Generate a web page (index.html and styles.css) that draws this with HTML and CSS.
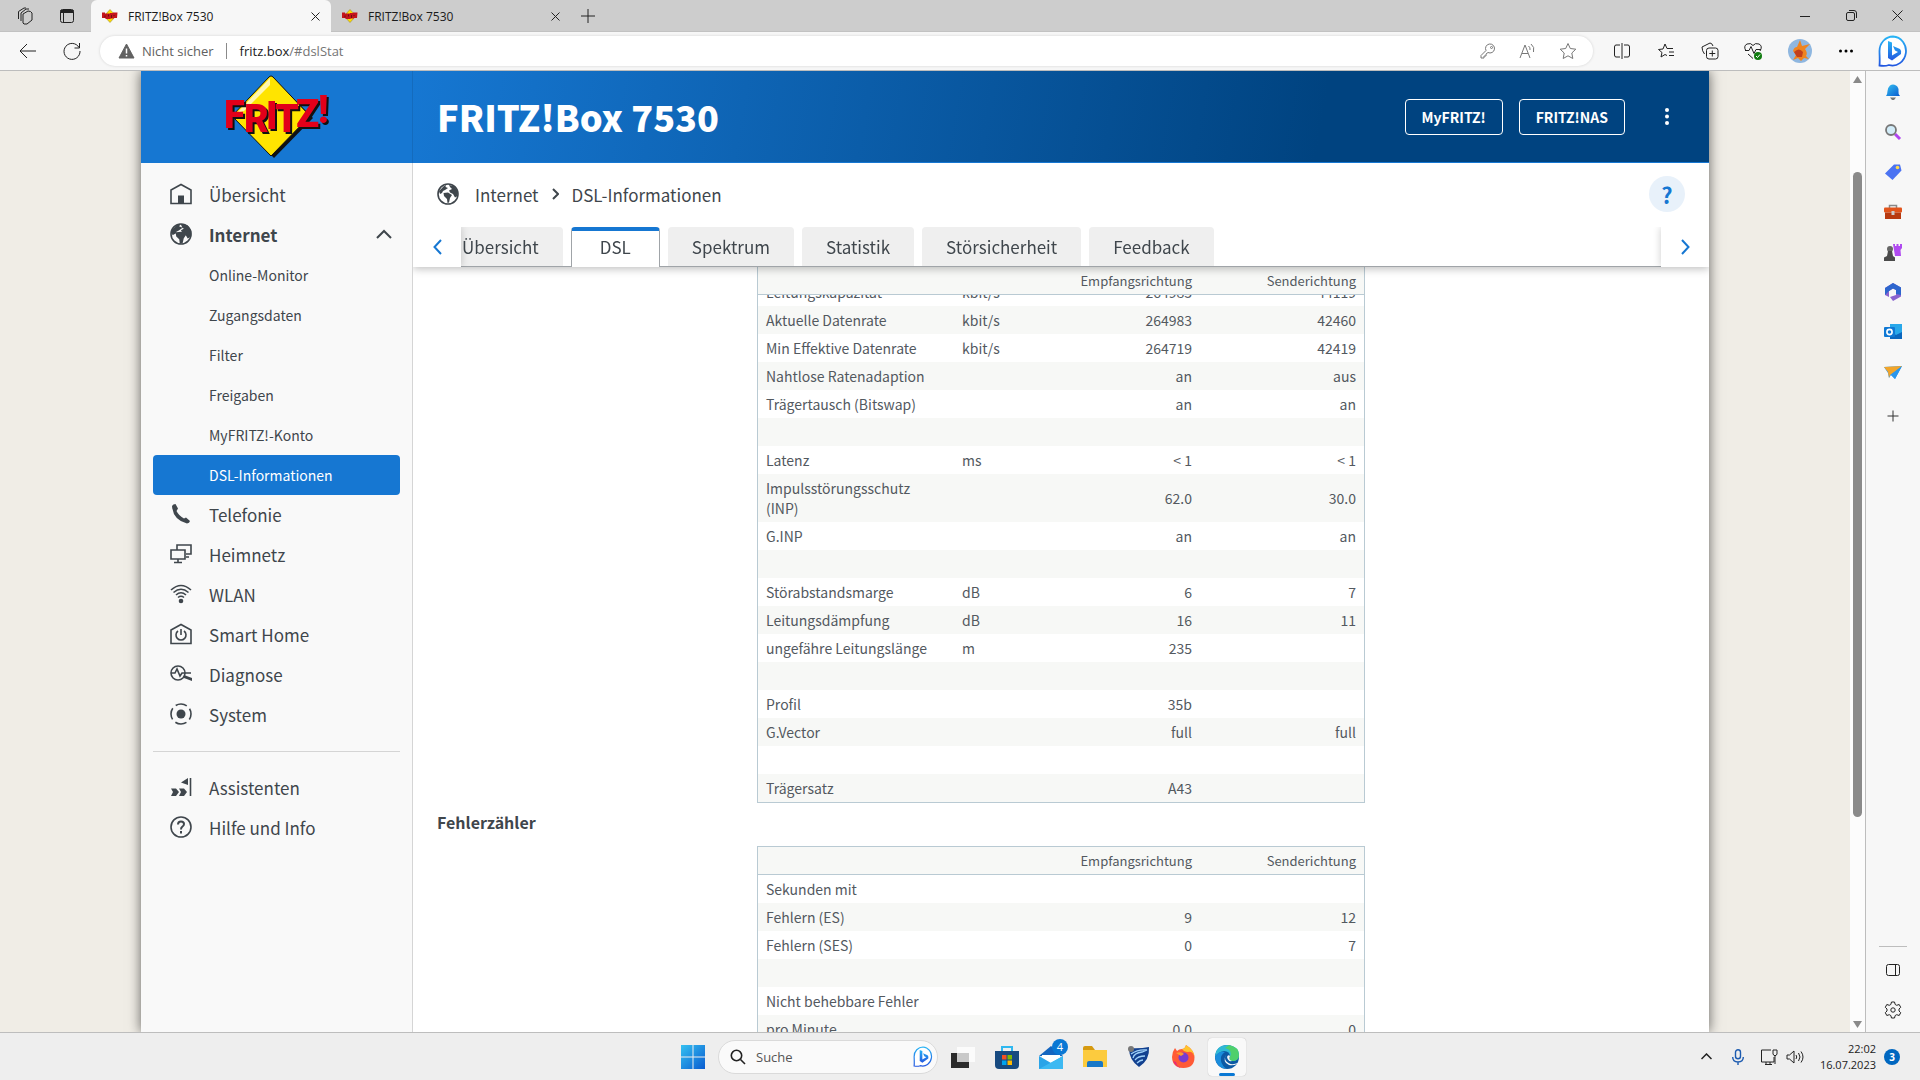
FILE: index.html
```html
<!DOCTYPE html>
<html lang="de">
<head>
    <meta charset="UTF-8">
    <meta name="viewport" content="width=device-width, initial-scale=1.0">
    <title>FRITZ!Box 7530</title>
    <link rel="stylesheet" href="styles.css">
</head>
<body>
    <svg class="defs" aria-hidden="true">
        <linearGradient id="gBlue" x1="0" y1="0" x2="1" y2="1"><stop offset="0" stop-color="#35c1f1"/><stop offset="1" stop-color="#0a5bd0"/></linearGradient>
        <linearGradient id="gBing" x1="0" y1="0" x2="0" y2="1"><stop offset="0" stop-color="#27b4f5"/><stop offset="1" stop-color="#2257e0"/></linearGradient>
        <symbol id="favicon" viewBox="0 0 16 14">
            <path d="M8 .5L14 7 8 13.500 2 7Z" fill="#ffdc00" stroke="#8a7a20" stroke-width=".5"/>
            <path d="M0 3.500h3v1h5V4h3v-.5h4.500L15 9h-3v.500H9L8 10H4L3 9H0z" fill="#c4141c"/>
            <path d="M3 6.500v2M6.500 5.500v2M9.500 6v3M12 6v1" stroke="#6a1010"/>
        </symbol>
        <symbol id="globe" viewBox="0 0 22 22">
            <circle cx="11" cy="11" r="10" fill="none" stroke="#3f464c" stroke-width="1.6"/>
            <path d="M2 8L7 3L9 2L8.500 4L11 5L8 7L6 8L5 10L3 11ZM6.500 10L11 9.500L15 12L13 15L12 19.500L10.500 20L10 16L7 13ZM12 2L17 3L20.500 8L20.500 13L18 14.500L16 11L13 9.500L12 7.500L15 6L13 4Z" fill="#3f464c"/>
        </symbol>
        <symbol id="bing" viewBox="0 0 30 32">
            <path d="M15 1.500a13.500 14.500 0 1 1-4 28.500C8 31 4 31 1.500 30.500C2 26 1.500 20 1.500 16A13.500 14.500 0 0 1 15 1.500Z" fill="#fff" stroke="url(#gBing)" stroke-width="1.800"/>
            <path d="M10 6l4 1.500v13l6-3.500l-3-1.500l-2-4.500l7 3q2 2 1 5l-9 6.500l-4-2.500Z" fill="url(#gBing)"/>
        </symbol>
    </svg>

    <header class="tabstrip">
        <button class="ico" aria-label="Arbeitsbereiche"><svg width="18" height="18" viewBox="0 0 18 18"><path d="M7 7l5-3q3 0 4 2v7l-5 4h-3l-1-1zM5 14V6l5-4h3M2.500 12V4.500L8 1h2"/></svg></button>
        <button class="ico" aria-label="Tab-Aktionen"><svg width="16" height="16" viewBox="0 0 16 16"><rect x="1.500" y="1.500" width="13" height="13" rx="2"/><path d="M1.500 3.500h13" stroke-width="3"/><path d="M4.500 5v9"/></svg></button>
        <div class="tab active"><svg class="fav"><use href="#favicon"/></svg><span>FRITZ!Box 7530</span><button aria-label="Tab schließen"><svg width="9" height="9" viewBox="0 0 9 9"><path d="M.5.5l8 8M8.500.5l-8 8"/></svg></button></div>
        <div class="tab"><svg class="fav"><use href="#favicon"/></svg><span>FRITZ!Box 7530</span><button aria-label="Tab schließen"><svg width="9" height="9" viewBox="0 0 9 9"><path d="M.5.5l8 8M8.500.5l-8 8"/></svg></button></div>
        <button class="newtab" aria-label="Neuer Tab"><svg width="14" height="14" viewBox="0 0 14 14"><path d="M7 0v14M0 7h14"/></svg></button>
        <div class="wincontrols">
            <button aria-label="Minimieren"><svg width="10" height="10" viewBox="0 0 10 10"><path d="M0 5.500h10"/></svg></button>
            <button aria-label="Wiederherstellen"><svg width="11" height="11" viewBox="0 0 11 11"><rect x=".5" y="2.500" width="8" height="8" rx="1.500"/><path d="M3 .5h5q2.500 0 2.500 2.500v5"/></svg></button>
            <button aria-label="Schließen"><svg width="11" height="11" viewBox="0 0 11 11"><path d="M.5.5l10 10M10.500.5l-10 10"/></svg></button>
        </div>
    </header>

    <div class="toolbar">
        <button aria-label="Zurück"><svg width="18" height="16" viewBox="0 0 18 16"><path d="M17 8H1M8 1L1 8l7 7"/></svg></button>
        <button aria-label="Aktualisieren"><svg width="18" height="18" viewBox="0 0 18 18"><path d="M16 5.500A8 8 0 1 0 17 9M16.500 1v5h-5"/></svg></button>
        <div class="address">
            <svg width="17" height="16" viewBox="0 0 17 16"><path d="M8.500 1L16 15H1Z" fill="#616161" stroke="#616161" stroke-linejoin="round"/><path d="M8.500 5.500v5M8.500 12v1.500" stroke="#fff" stroke-width="1.500"/></svg>
            <span class="unsafe">Nicht sicher</span>
            <span class="url"><b>fritz.box</b>/#dslStat</span>
            <div class="address-icons">
                <svg width="16" height="16" viewBox="0 0 16 16"><path d="M8 9.500a4.500 4.500 0 1 0-2-2L1 12.500V15h3v-2h2v-2z"/><circle cx="11.500" cy="4.500" r="1"/></svg>
                <svg width="17" height="16" viewBox="0 0 17 16"><path d="M1 15L6 2l5 13M3 10.500h6M9.500 3q2 1.500 1.500 4M12 1q4 3 2.500 8"/></svg>
                <svg width="18" height="18" viewBox="0 0 18 18"><path d="M9 1.500l2.300 5 5.500.7-4 3.800 1 5.500L9 13.800 4.200 16.500l1-5.500-4-3.800 5.500-.7z"/></svg>
            </div>
        </div>
        <div class="tools">
            <svg width="18" height="18" viewBox="0 0 18 18"><path d="M7 3H3q-1.500 0-1.500 2v8q0 2 1.500 2h4M11 3h4q1.500 0 1.500 2v8q0 2-1.500 2h-4M9 1v16"/></svg>
            <svg width="18" height="18" viewBox="0 0 18 18"><path d="M10 13.500L8 12.500 4 15l1-4.500-3.500-3L6 7l2-5 2 4.500h6M12 10h5M12 13.500h5"/></svg>
            <svg width="18" height="18" viewBox="0 0 18 18"><rect x="5.500" y="6" width="11.500" height="11" rx="2.500"/><path d="M3.500 12Q1 9 1 5l8-4q2 0 3 3M11.300 8.500v6M8.300 11.500h6"/></svg>
            <svg width="18" height="18" viewBox="0 0 18 18"><path d="M2 9Q-1 4 3 2q4-1.500 6 1.500Q11 .5 15 2q4 2 1 7M1 8.500h4l2-4 3 7 2-4h5M4 12l5 4.500"/><circle cx="14" cy="14" r="4" fill="#107c10" stroke="none"/><path d="M12 14l1.500 1.500 2.500-3" stroke="#fff"/></svg>
            <svg width="24" height="24" viewBox="0 0 24 24"><circle cx="12" cy="12" r="12" fill="#8fb7e0" stroke="none"/><path d="M5 12q1-4 4-4l3-7 2 6 8-2-5 5q3 4 1 7l3 3-5-1-3 3-3-3-5 2 3-5z" fill="#ef8420" stroke="none"/><path d="M6 13q5-5 9 0l-1 5H9z" fill="#c2401c" stroke="none"/></svg>
            <svg width="16" height="4" viewBox="0 0 16 4" class="dots"><circle cx="2.500" cy="2" r="1.500"/><circle cx="8" cy="2" r="1.500"/><circle cx="13.500" cy="2" r="1.500"/></svg>
        </div>
        <button class="bing" aria-label="Bing"><svg width="30" height="32"><use href="#bing"/></svg></button>
    </div>

    <div class="browser">
        <div class="viewport">
            <div class="page">
                <div class="page-head">
                    <a class="logo" href="#">
                        <svg width="104" height="84" viewBox="0 0 104 84">
                            <path d="M50 4L89 43L50 83L11 43Z" fill="#111"/>
                            <path d="M47 1Q48 1 49 2L86 41L47 81L8 41L45 2Q46 1 47 1Z" fill="#ffe400" stroke="#111"/>
                            <path d="M46 3L13 38L20 36L46 10Z" fill="#fff7b0"/>
                            <g class="logo-text">
                                <text x="0" y="53">F</text><text x="20" y="57">R</text><text x="42" y="54">I</text><text x="51" y="57">T</text><text x="72" y="52">Z</text><text x="94" y="48">!</text>
                            </g>
                        </svg>
                    </a>
                    <div class="title-bar">
                        <h1>FRITZ!Box 7530</h1>
                        <button class="head-btn">MyFRITZ!</button>
                        <button class="head-btn">FRITZ!NAS</button>
                        <button class="more" aria-label="Menü"><svg width="4" height="17" viewBox="0 0 4 17" fill="#fff"><circle cx="2" cy="2" r="2"/><circle cx="2" cy="8.500" r="2"/><circle cx="2" cy="15" r="2"/></svg></button>
                    </div>
                </div>
                <div class="page-body">
                    <nav class="menu">
                        <a href="#"><svg viewBox="0 0 22 22"><path d="M1 20.500V7L11 1.500 21 7v13.500z"/><path d="M8 12.500h6V20H8z" fill="#3f464c" stroke="none"/></svg>Übersicht</a>
                        <a href="#" class="open"><svg viewBox="0 0 22 22"><use href="#globe"/></svg>Internet<svg class="caret" viewBox="0 0 16 10"><path d="M1 9l7-7 7 7"/></svg></a>
                        <a href="#" class="sub">Online-Monitor</a>
                        <a href="#" class="sub">Zugangsdaten</a>
                        <a href="#" class="sub">Filter</a>
                        <a href="#" class="sub">Freigaben</a>
                        <a href="#" class="sub">MyFRITZ!-Konto</a>
                        <a href="#" class="sub selected">DSL-Informationen</a>
                        <a href="#"><svg viewBox="0 0 22 22"><path d="M2 3Q3 1 5.500 1L8 5.500 6.500 8Q9 13 14 15.500l2-1 4 3.500q-.5 2-3 2.500Q3 17 2 3z" fill="#3f464c" stroke="none"/></svg>Telefonie</a>
                        <a href="#"><svg viewBox="0 0 22 22"><path d="M7 7V2h14v9h-5M1 7h14v9H1zM8 16v3M4 19.500h8M16 14h3"/></svg>Heimnetz</a>
                        <a href="#"><svg viewBox="0 0 22 22"><path d="M1 7Q11-2 21 7M3.500 9.500q7.500-6.500 15 0M6 12q5-4.500 10 0M8 14.500q3-2.500 6 0"/><circle cx="11" cy="18" r="2.300" fill="#3f464c" stroke="none"/></svg>WLAN</a>
                        <a href="#"><svg viewBox="0 0 22 22"><path d="M1 20.500V7L11 1.500 21 7v13.500zM8 8a5 5 0 1 0 6 0M11 6v6"/></svg>Smart Home</a>
                        <a href="#"><svg viewBox="0 0 22 22"><circle cx="8" cy="10" r="7"/><path d="M1 10h4l2-4 3 7 2-3h9"/><path d="M14 12l8 3v3l-8-3z" fill="#3f464c" stroke="none"/></svg>Diagnose</a>
                        <a href="#"><svg viewBox="0 0 22 22"><circle cx="11" cy="11" r="4.500" fill="#3f464c" stroke="none"/><circle cx="11" cy="11" r="10" stroke-dasharray="11.700 4" stroke-dashoffset="5.850"/></svg>System</a>
                        <hr>
                        <a href="#"><svg viewBox="0 0 22 22"><path d="M11 6.500L18 2v7zM1 12.500h5l3 3.500-3 4H1l2-4zM9 12.500h5l3 3.500-3 4H9l2-4z" fill="#3f464c" stroke="none"/><path d="M20.500 2v18"/></svg>Assistenten</a>
                        <a href="#"><svg viewBox="0 0 22 22"><circle cx="11" cy="11" r="10"/><path d="M8 8.500q0-3 3-3t3 2.500q0 1.500-1.500 2.500T11 13.500M11 15v2.500" stroke-width="2"/></svg>Hilfe und Info</a>
                    </nav>
                    <main class="content">
                        <div class="crumbs">
                            <svg width="22" height="22"><use href="#globe"/></svg>
                            <a href="#">Internet</a>
                            <svg class="sep" width="7" height="12" viewBox="0 0 7 12"><path d="M1 1l5 5-5 5"/></svg>
                            <a href="#">DSL-Informationen</a>
                            <button class="help">?</button>
                        </div>
                        <div class="tabs">
                            <button class="scroll-btn" aria-label="Zurück"><svg width="9" height="16" viewBox="0 0 9 16"><path d="M8 1L1.500 8 8 15"/></svg></button>
                            <div class="tab-list">
                                <a href="#">Übersicht</a>
                                <a href="#" class="current">DSL</a>
                                <a href="#">Spektrum</a>
                                <a href="#">Statistik</a>
                                <a href="#">Störsicherheit</a>
                                <a href="#">Feedback</a>
                            </div>
                            <button class="scroll-btn right" aria-label="Weiter"><svg width="9" height="16" viewBox="0 0 9 16"><path d="M1 1l6.500 7L1 15"/></svg></button>
                        </div>
                        <div class="scroller" id="scroller">
                            <table>
                                <thead>
                                    <tr><th class="name"></th><th class="unit"></th><th class="rx">Empfangsrichtung</th><th class="tx">Senderichtung</th></tr>
                                </thead>
                                <tbody>
                                    <tr><td>Leitungskapazität</td><td>kbit/s</td><td>264983</td><td>44119</td></tr>
                                    <tr><td>Aktuelle Datenrate</td><td>kbit/s</td><td>264983</td><td>42460</td></tr>
                                    <tr><td>Min Effektive Datenrate</td><td>kbit/s</td><td>264719</td><td>42419</td></tr>
                                    <tr><td>Nahtlose Ratenadaption</td><td></td><td>an</td><td>aus</td></tr>
                                    <tr><td>Trägertausch (Bitswap)</td><td></td><td>an</td><td>an</td></tr>
                                    <tr><td></td><td></td><td></td><td></td></tr>
                                    <tr><td>Latenz</td><td>ms</td><td>&lt; 1</td><td>&lt; 1</td></tr>
                                    <tr><td>Impulsstörungsschutz (INP)</td><td></td><td>62.0</td><td>30.0</td></tr>
                                    <tr><td>G.INP</td><td></td><td>an</td><td>an</td></tr>
                                    <tr><td></td><td></td><td></td><td></td></tr>
                                    <tr><td>Störabstandsmarge</td><td>dB</td><td>6</td><td>7</td></tr>
                                    <tr><td>Leitungsdämpfung</td><td>dB</td><td>16</td><td>11</td></tr>
                                    <tr><td>ungefähre Leitungslänge</td><td>m</td><td>235</td><td></td></tr>
                                    <tr><td></td><td></td><td></td><td></td></tr>
                                    <tr><td>Profil</td><td></td><td>35b</td><td></td></tr>
                                    <tr><td>G.Vector</td><td></td><td>full</td><td>full</td></tr>
                                    <tr><td></td><td></td><td></td><td></td></tr>
                                    <tr><td>Trägersatz</td><td></td><td>A43</td><td></td></tr>
                                </tbody>
                            </table>
                            <h2>Fehlerzähler</h2>
                            <table>
                                <thead>
                                    <tr><th class="name"></th><th class="unit"></th><th class="rx">Empfangsrichtung</th><th class="tx">Senderichtung</th></tr>
                                </thead>
                                <tbody>
                                    <tr><td>Sekunden mit</td><td></td><td></td><td></td></tr>
                                    <tr><td>Fehlern (ES)</td><td></td><td>9</td><td>12</td></tr>
                                    <tr><td>Fehlern (SES)</td><td></td><td>0</td><td>7</td></tr>
                                    <tr><td></td><td></td><td></td><td></td></tr>
                                    <tr><td>Nicht behebbare Fehler</td><td></td><td></td><td></td></tr>
                                    <tr><td>pro Minute</td><td></td><td>0.0</td><td>0</td></tr>
                                    <tr><td></td><td></td><td></td><td></td></tr>
                                </tbody>
                            </table>
                        </div>
                    </main>
                </div>
            </div>
        </div>
        <div class="scrollbar">
            <svg width="9" height="7" viewBox="0 0 9 7"><path d="M4.500 0L9 7H0z"/></svg>
            <div class="track"><div class="thumb"></div></div>
            <svg width="9" height="7" viewBox="0 0 9 7"><path d="M4.500 7L9 0H0z"/></svg>
        </div>
        <aside class="edgebar">
            <button aria-label="Benachrichtigungen"><svg viewBox="0 0 18 18"><path d="M2 13q1.500-2 1.500-5T6 2.500q3-2 6 0T14.500 8 16 13z" fill="url(#gBlue)"/><path d="M6 14.500h6L10 17H8z" fill="#777"/></svg></button>
            <button aria-label="Suchen"><svg viewBox="0 0 18 18"><path d="M11 11l5 5" stroke="#b044f0" stroke-width="3"/><circle cx="7" cy="7" r="5" fill="#d2ecf8" stroke="#777" stroke-width="1.800"/></svg></button>
            <button aria-label="Shopping"><svg viewBox="0 0 18 18"><path d="M10 1.500h6l1.500 6L8.500 17 1 10.500z" fill="#4b73f2"/><circle cx="13.500" cy="4.500" r="1.800" fill="#ffd94a"/></svg></button>
            <button aria-label="Tools"><svg viewBox="0 0 18 18"><path d="M5.500 5V2.500h7V5" fill="none" stroke="#888" stroke-width="1.500"/><rect y="4.500" width="18" height="5" rx="1" fill="#e2541c"/><path d="M1 9.500h16V16H1z" fill="#b83a10"/><rect x="7.500" y="8" width="3" height="4" fill="#ccc"/></svg></button>
            <button aria-label="Spiele"><svg viewBox="0 0 18 18"><path d="M9 1h2v2h1.500V1h2v2H16V1h2v4l-1.500 2 .5 6H11z" fill="#b04af0"/><circle cx="6" cy="6" r="3" fill="#666"/><path d="M4 8h4l1 5 2 1.500V18H0v-3.500L3 13z" fill="#4a4a4a"/></svg></button>
            <button aria-label="Microsoft 365"><svg viewBox="0 0 18 18"><path d="M9 0l8 4.500v9L9 18l-3-4 6-2V7L9 5.500 5 8v6l-4-2V5z" fill="#8a63cf"/><path d="M9 0l8 4.500V12l-5-1V7L9 5.500 5 8l-4 4V5z" fill="#2d66ce"/></svg></button>
            <button aria-label="Outlook"><svg viewBox="0 0 18 18"><path d="M6 1h12v15H6z" fill="#28a8ea"/><path d="M6 16V8l6 4 6-3v7z" fill="#0a66bd"/><rect y="4" width="11" height="10" rx="1" fill="#0f78d4"/><circle cx="5.500" cy="9" r="2.600" fill="none" stroke="#fff" stroke-width="1.600"/></svg></button>
            <button aria-label="Drop"><svg viewBox="0 0 18 18"><path d="M0 4l18-1-7 13-4-4-2 3-1-5z" fill="#2a96ec"/><path d="M0 4l18-1L6 12 5 15 4 9z" fill="#f2a52a"/><path d="M18 3L7 12l4 4z" fill="#2a96ec"/></svg></button>
            <button aria-label="Hinzufügen" class="add"><svg viewBox="0 0 18 18"><path d="M9 3.500v11M3.500 9h11" stroke="#333"/></svg></button>
            <div class="edge-bottom">
                <button aria-label="Seitenleiste"><svg viewBox="0 0 18 18" fill="none" stroke="#222"><rect x="2.500" y="3.500" width="13" height="11" rx="2"/><path d="M11.500 3.500v11"/></svg></button>
                <button aria-label="Einstellungen"><svg viewBox="0 0 18 18" fill="none" stroke="#222"><path d="M7.500 1h3l.7 2.500 1.500.8 2.500-.8 1.500 2.800L15 8v2l1.700 1.700-1.500 2.800-2.500-.8-1.500.8-.7 2.500h-3l-.7-2.500-1.500-.8-2.500.8-1.500-2.800L3 10V8L1.300 6.300l1.500-2.800 2.500.8 1.500-.8z"/><circle cx="9" cy="9" r="2.200"/></svg></button>
            </div>
        </aside>
    </div>

    <footer class="taskbar">
        <div class="task-center">
            <button class="start" aria-label="Start"><svg width="24" height="24" viewBox="0 0 24 24" fill="url(#gBlue)"><path d="M0 0h11.500v11.500H0zM12.500 0H24v11.500H12.500zM0 12.500h11.500V24H0zM12.500 12.500H24V24H12.500z"/></svg></button>
            <label class="search">
                <svg width="16" height="16" viewBox="0 0 16 16" fill="none" stroke="#222" stroke-width="1.600"><circle cx="6.500" cy="6.500" r="5.200"/><path d="M10.500 10.500L15 15"/></svg>
                <input type="text" placeholder="Suche" aria-label="Suche">
                <svg width="20" height="21"><use href="#bing"/></svg>
            </label>
            <button class="task" aria-label="Aktive Anwendungen"><svg viewBox="0 0 24 24"><path d="M0 8h18v15H0z" fill="#2b2b2b"/><path d="M6 2h18v15H6z" fill="#fff" opacity=".75"/></svg></button>
            <button class="task" aria-label="Store"><svg viewBox="0 0 24 24"><path d="M7 6V2h10v4" fill="none" stroke="#2fb8f0" stroke-width="2"/><path d="M0 6h24v14q0 4-4 4H4q-4 0-4-4z" fill="#174a80"/><path d="M7 10h4.500v4.500H7z" fill="#f25022"/><path d="M12.500 10H17v4.500h-4.500z" fill="#7fba00"/><path d="M7 15.500h4.500V20H7z" fill="#00a4ef"/><path d="M12.500 15.500H17V20h-4.500z" fill="#ffb900"/></svg></button>
            <button class="task" aria-label="Mail"><svg viewBox="0 0 24 24"><path d="M0 11L12 1l12 10z" fill="#1466c0"/><path d="M3 10h18v10H3z" fill="#fff"/><path d="M0 11l12 7 12-7v13H0z" fill="#2aa4e8"/><path d="M24 11v13H0z" fill="#3db9f2"/></svg><span class="badge">4</span></button>
            <button class="task" aria-label="Explorer"><svg viewBox="0 0 24 24"><path d="M0 3q0-2 2-2h7l3 4H0z" fill="#d69a10"/><path d="M0 5h24v17H0z" fill="#fccb3e"/><path d="M4 22v-4q0-2 2-2h12q2 0 2 2v4z" fill="#1878c8"/></svg></button>
            <button class="task" aria-label="Rocket League"><svg viewBox="0 0 24 24"><path d="M2 3q10 1 20-1 1 13-10 20Q2 15 2 3z" fill="#12408f"/><path d="M4 9q7-5 16-4l-5 2q-8 1-9 6M8 15q3-4 10-4M10 18q3-3 6-3" fill="none" stroke="#9fd0f8" stroke-width="1.300"/><circle cx="4" cy="4" r="3" fill="#777"/></svg></button>
            <button class="task" aria-label="Firefox"><svg viewBox="0 0 24 24"><path d="M1 12Q1 7 4 3l2 3q2-2 5-2 3 0 4-4 8 5 8.500 12 0 11-11 11T1 12z" fill="#ff5a36"/><path d="M11 4q3 0 4-4 8 5 8.500 12Q22 6 17 7q-4 0-6-3z" fill="#ffc42e"/><path d="M2 16q4 8 11 7-7 0-8-6z" fill="#e6287a"/><circle cx="12.500" cy="12.500" r="5" fill="#7a3bd0"/><path d="M5 8q6-2 8 1l-3 2z" fill="#ff9a2e"/></svg></button>
            <button class="task running" aria-label="Edge"><svg viewBox="0 0 24 24"><circle cx="12" cy="12" r="12" fill="#0c59a4"/><path d="M0 12Q1 0 12 0q12 1 12 10 0 6-7 6-4-1-2-4 0-6-6-6Q3 7 0 12z" fill="#2fb9d6"/><path d="M14 0q10 2 10 10 0 6-7 6-4-1-2-4 3-7-5-9z" fill="#4fd06c"/><path d="M11 10q-2 3 0 6 4 5 12 2l-1 1q-4 2-8 1-7-3-3-10z" fill="#f7f7f7"/><path d="M12 12q1-3 3-1-2 4 2 5-4 1-5-4z" fill="#f7f7f7"/><path d="M0 12q3-6 10-5-5 3-4 9 1 5 6 8Q1 23 0 12z" fill="#1a8ddc"/></svg></button>
        </div>
        <div class="tray">
            <svg width="11" height="7" viewBox="0 0 11 7"><path d="M.5 6l5-5 5 5"/></svg>
            <svg width="12" height="16" viewBox="0 0 12 16" class="mic"><rect x="3.500" y=".7" width="5" height="9" rx="2.500"/><path d="M.7 8q0 5 5.300 5t5.300-5M6 13v3"/></svg>
            <svg width="18" height="16" viewBox="0 0 18 16"><path d="M11 1H1.500v12H14V8M5 15.500h7M6 13v2M10 13v2M13 1h4v4l-1 1.500h-2L13 5zM15 7v8"/></svg>
            <svg width="18" height="14" viewBox="0 0 18 14"><path d="M1 5h2.500L8 1v12L3.500 9H1zM10 5q1.500 2 0 4M12.500 3q3 4 0 8M15 1.500q4 5.500 0 11"/></svg>
            <div class="clock">22:02<br>16.07.2023</div>
            <span class="count">3</span>
        </div>
    </footer>
    <script>
        // start below the first table border so the header row sticks
        document.getElementById('scroller').scrollTop = 18;
    </script>
</body>
</html>
```
FILE: styles.css
```css
* {
    box-sizing: border-box;
}
body {
    margin: 0;
    height: 100vh;
    display: flex;
    flex-direction: column;
    overflow: hidden;
    font-family: "Open Sans", sans-serif;
    font-size: 12px;
    color: #1b1b1b;
    background: #f7f7f7;
}
button {
    padding: 0;
    border: none;
    background: none;
    font-family: inherit;
    color: inherit;
    display: flex;
    align-items: center;
    justify-content: center;
}
a {
    color: inherit;
    text-decoration: none;
}
svg {
    display: block;
    flex: none;
}
.defs {
    position: absolute;
    width: 0;
    height: 0;
}

/* browser tabs */
.tabstrip {
    display: flex;
    height: 32px;
    flex: none;
    background: #cdcdcd;
    border-bottom: 1px solid #c2c2c2;
}
.tabstrip svg:not(.fav), .toolbar > button:not(.bing) svg, .tools svg:not(.dots), .address-icons svg {
    fill: none;
    stroke: #222;
}
.ico {
    width: 42px;
    padding-left: 8px;
}
.tab {
    display: flex;
    align-items: center;
    width: 240px;
    height: 32px;
    padding: 0 11px;
    gap: 10px;
}
.tab span {
    flex: 1;
}
.tab.active {
    background: #f7f7f7;
    border-radius: 6px 6px 0 0;
    margin-left: 7px;
}
.fav {
    width: 16px;
    height: 14px;
}
.newtab {
    width: 34px;
}
.wincontrols {
    display: flex;
    margin-left: auto;
}
.wincontrols button {
    width: 46px;
}

/* address row */
.toolbar {
    display: flex;
    align-items: center;
    height: 39px;
    flex: none;
    background: #f7f7f7;
    border-bottom: 1px solid #bdbdbd;
}
.toolbar > button {
    width: 44px;
}
.toolbar > button:first-child {
    margin-left: 6px;
}
.address {
    display: flex;
    align-items: center;
    flex: 1;
    height: 30px;
    margin-left: 6px;
    padding: 0 16px 0 18px;
    border-radius: 15px;
    background: #fff;
    box-shadow: 0 0 3px rgba(0, 0, 0, 0.15);
    font-size: 13px;
}
.unsafe {
    margin-left: 7px;
    padding-right: 12px;
    border-right: 1px solid #8a8a8a;
    line-height: 16px;
    color: #616161;
}
.url {
    margin-left: 13px;
    color: #757575;
}
.url b {
    font-weight: normal;
    color: #1b1b1b;
}
.address-icons {
    display: flex;
    align-items: center;
    gap: 23px;
    margin-left: auto;
}
.address-icons svg {
    stroke: #777;
}
.tools {
    display: flex;
    align-items: center;
    justify-content: space-between;
    width: 241px;
    margin-left: 20px;
}
.toolbar > .bing {
    width: 54px;
    margin-left: 12px;
}

/* browser area */
.browser {
    display: flex;
    flex: 1;
    min-height: 0;
}
.viewport {
    flex: 1;
    display: flex;
    justify-content: center;
    overflow: hidden;
    background: #f0ede6;
}
.scrollbar {
    display: flex;
    flex-direction: column;
    align-items: center;
    width: 16px;
    padding: 5px 0 4px;
    background: #fcfcfc;
    border-right: 1px solid #bdbdbd;
    fill: #8a8a8a;
}
.track {
    flex: 1;
    width: 9px;
    padding-top: 89px;
}
.thumb {
    height: 76%;
    border-radius: 5px;
    background: #8a8a8a;
}
.edgebar {
    display: flex;
    flex-direction: column;
    align-items: center;
    width: 54px;
    padding: 1px 0 2px;
}
.edgebar button {
    width: 40px;
    height: 40px;
}
.edgebar svg {
    width: 18px;
    height: 18px;
}
.edgebar .add {
    margin-top: 4px;
}
.edge-bottom {
    margin-top: auto;
    padding-top: 3px;
    border-top: 1px solid #bdbdbd;
    width: 28px;
    display: flex;
    flex-direction: column;
    align-items: center;
}

/* FRITZ!Box page */
.page {
    display: flex;
    flex-direction: column;
    width: 100%;
    max-width: 1568px;
    font-family: "Noto Sans CJK SC", sans-serif;
    color: #3f464c;
    background: #fff;
    box-shadow: 0 0 12px rgba(0, 0, 0, 0.6);
}
.page-head {
    display: flex;
    height: 92px;
    flex: none;
    background: #1677d2;
    color: #fff;
}
.logo {
    width: 272px;
    padding: 4px 0 0 83px;
    border-right: 1px solid #146bbd;
}
.logo svg {
    overflow: visible;
}
.logo-text {
    font-family: Roboto, sans-serif;
    font-weight: 900;
    font-size: 38px;
    fill: #e2001a;
    filter: drop-shadow(2px 2px 0 #111);
}
.title-bar {
    display: flex;
    align-items: center;
    flex: 1;
    padding: 0 32px 0 24px;
    border-bottom: 1px solid #1677d2;
    background: linear-gradient(100deg, #1677d2 0%, #004380 70%);
}
h1 {
    flex: 1;
    margin: 0;
    padding-bottom: 2px;
    font-size: 36px;
    font-weight: 900;
    line-height: 40px;
}
.head-btn {
    height: 36px;
    margin-right: 16px;
    padding: 0 16px;
    border: 1px solid #fff;
    border-radius: 4px;
    font-size: 14px;
    font-weight: bold;
}
.more {
    width: 20px;
    height: 36px;
    margin-left: 16px;
}
.page-body {
    display: flex;
    flex: 1;
    min-height: 0;
}
.menu {
    width: 272px;
    padding: 12px 12px 0;
    border-right: 1px solid #d5d5d5;
    background: #f9f9f9;
    font-size: 17px;
}
.menu a {
    display: flex;
    align-items: center;
    height: 40px;
    padding: 0 8px 2px 17px;
    gap: 17px;
    border-radius: 4px;
}
.menu svg {
    width: 22px;
    height: 22px;
    fill: none;
    stroke: #3f464c;
    stroke-width: 1.600;
}
.menu .open {
    font-weight: bold;
}
.menu .caret {
    width: 16px;
    height: 10px;
    margin-left: auto;
    stroke-width: 2;
}
.menu .sub {
    padding: 0 0 0 56px;
    font-size: 14px;
}
.menu .selected {
    background: #1677d2;
    color: #fff;
}
.menu hr {
    height: 1px;
    margin: 16px 0;
    border: none;
    background: #d5d5d5;
}
.content {
    display: flex;
    flex-direction: column;
    flex: 1;
    min-width: 0;
}
.crumbs {
    display: flex;
    align-items: center;
    height: 64px;
    flex: none;
    padding: 0 24px 2px;
    font-size: 17px;
}
.crumbs a:first-of-type {
    margin-left: 16px;
}
.sep {
    margin: 0 13px;
    fill: none;
    stroke: #3f464c;
    stroke-width: 2;
}
.help {
    width: 36px;
    height: 36px;
    margin-left: auto;
    border-radius: 50%;
    background: #e8f1fa;
    color: #1677d2;
    font-size: 22px;
    font-weight: bold;
}
.tabs {
    display: flex;
    height: 40px;
    flex: none;
    position: relative;
    z-index: 2;
    background: #fff;
    box-shadow: 0 2px 8px rgba(0, 0, 0, 0.25);
    clip-path: inset(0 0 -12px 0);
}
.scroll-btn {
    width: 48px;
    flex: none;
    box-shadow: 0 0 8px rgba(0, 0, 0, 0.2);
    clip-path: inset(0 -8px 0 0);
    background: #fff;
    z-index: 1;
}
.scroll-btn.right {
    clip-path: inset(0 0 0 -8px);
}
.scroll-btn svg {
    fill: none;
    stroke: #1677d2;
    stroke-width: 2;
}
.tab-list {
    display: flex;
    flex: 1;
    gap: 8px;
    overflow: hidden;
    box-shadow: inset 0 -1px #a0a4a8;
    font-size: 17px;
}
.tab-list a {
    height: 39px;
    padding: 0 24px;
    line-height: 40px;
    border-radius: 4px 4px 0 0;
    background: #efefef;
}
.tab-list a:first-child {
    margin-left: -23px;
}
.tab-list .current {
    height: 40px;
    padding: 0 28px;
    line-height: 32px;
    border: 1px solid #a0a4a8;
    border-top: 4px solid #1677d2;
    border-bottom: none;
    background: #fff;
}
.scroller {
    flex: 1;
    min-height: 0;
    overflow: hidden;
    padding: 0 24px;
}
table {
    width: 608px;
    margin: 0 auto;
    border: 1px solid #b9cad3;
    border-spacing: 0;
    table-layout: fixed;
    font-size: 14px;
    line-height: 20px;
    color: #53595f;
}
th {
    position: sticky;
    top: 0;
    height: 28px;
    padding: 4px 8px 3px;
    border-bottom: 1px solid #b9cad3;
    background: #f7f8f6;
    font-size: 13px;
    font-weight: normal;
    text-align: right;
}
.name {
    width: 196px;
}
.unit {
    width: 82px;
}
.tx {
    width: 164px;
}
td {
    height: 28px;
    padding: 4px 8px;
}
td:first-child {
    padding-right: 16px;
}
td:nth-last-child(-n+2) {
    text-align: right;
}
tbody tr:nth-child(even) {
    background: #f7f8f6;
}
h2 {
    margin: 0;
    padding: 7px 0 12px;
    font-size: 16px;
    line-height: 24px;
}

/* taskbar */
.taskbar {
    display: flex;
    align-items: center;
    justify-content: center;
    position: relative;
    height: 48px;
    flex: none;
    border-top: 1px solid #bdbdbd;
    background: #eee;
}
.task-center {
    display: flex;
    align-items: center;
    gap: 6px;
}
.start {
    width: 38px;
    height: 38px;
}
.search {
    display: flex;
    align-items: center;
    width: 220px;
    height: 34px;
    padding: 0 4px 0 11px;
    gap: 8px;
    border: 1px solid #dadada;
    border-radius: 17px;
    background: #fafafa;
}
.search input {
    flex: 1;
    min-width: 0;
    border: none;
    background: none;
    font-family: inherit;
    font-size: 13px;
}
.search input::placeholder {
    color: #555;
}
.task {
    position: relative;
    width: 38px;
    height: 38px;
    border-radius: 4px;
}
.task svg {
    width: 24px;
    height: 24px;
}
.badge {
    position: absolute;
    top: 1px;
    right: 2px;
    width: 16px;
    height: 16px;
    border-radius: 8px;
    background: #0a78d4;
    color: #fff;
    font-size: 11px;
    line-height: 16px;
}
.running {
    background: #f9f9f9;
    box-shadow: 0 0 1px rgba(0, 0, 0, 0.3);
}
.running::after {
    content: "";
    position: absolute;
    bottom: 0;
    width: 16px;
    height: 3px;
    border-radius: 2px;
    background: #0a78d4;
}
.tray {
    display: flex;
    align-items: center;
    position: absolute;
    right: 20px;
    gap: 8px;
    fill: none;
    stroke: #222;
}
.tray svg:first-child {
    margin-right: 12px;
    stroke-width: 1.500;
}
.tray .mic {
    margin-right: 8px;
    stroke: #1c5bb0;
    stroke-width: 1.400;
}
.clock {
    margin-left: 8px;
    font-size: 11px;
    line-height: 16px;
    text-align: right;
}
.count {
    width: 16px;
    height: 16px;
    border-radius: 8px;
    background: #0067c0;
    color: #fff;
    font-size: 10px;
    font-weight: bold;
    line-height: 16px;
    text-align: center;
}
```
